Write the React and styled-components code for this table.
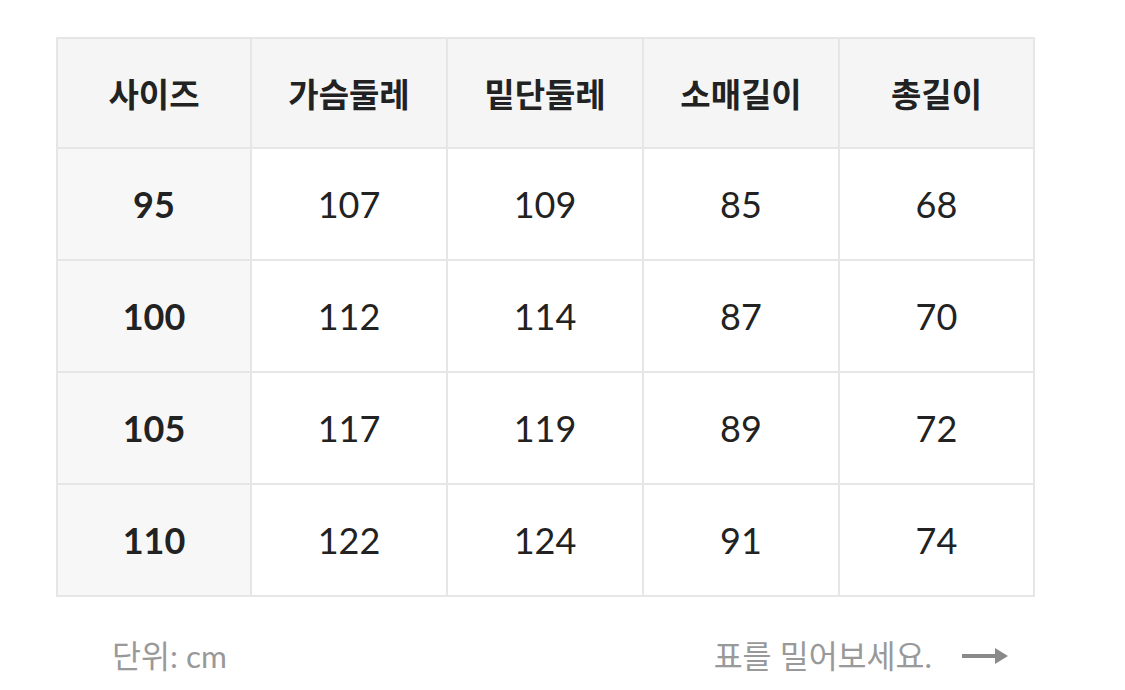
import React from "react";
import styled, { createGlobalStyle } from "styled-components";

const Global = createGlobalStyle`
  html, body { margin: 0; padding: 0; background: #fff; }
  body { font-family: Lato, "Noto Sans CJK KR", sans-serif; color: #222; }
`;

const Page = styled.div`
  padding: 37px 0 0 56px;
  width: 979px;
`;

const Table = styled.table`
  width: 977px;
  border-collapse: collapse;
  table-layout: fixed;
  border: 2px solid #e6e6e6;
`;

const Col = styled.col`
  width: ${(p) => p.$w}px;
`;

const Row = styled.tr`
  height: ${(p) => (p.$head ? "110px" : "112px")};
`;

const HeadCell = styled.th`
  background: #f5f5f5;
  border: 2px solid #e6e6e6;
  font-family: "Noto Sans CJK KR", sans-serif;
  font-size: 33px;
  font-weight: 700;
  color: #222;
  text-align: center;
  vertical-align: middle;
  padding: 0;
`;

const Cell = styled.td`
  background: ${(p) => (p.$size ? "#f7f7f7" : "#fff")};
  border: 2px solid #e6e6e6;
  font-family: Lato, "Noto Sans CJK KR", sans-serif;
  font-size: 36px;
  font-weight: ${(p) => (p.$size ? 700 : 400)};
  color: #222;
  text-align: center;
  vertical-align: middle;
  padding: 0;
`;

const Footer = styled.div`
  display: flex;
  justify-content: space-between;
  align-items: center;
  margin-top: 39px;
  padding: 0 27px 0 56px;
  font-family: Lato, "Noto Sans CJK KR", sans-serif;
  font-size: 31.5px;
  line-height: 40px;
  color: #999;
`;

const Hint = styled.div`
  display: flex;
  align-items: center;
  gap: 30px;
`;

const Arrow = () => (
  <svg width="46" height="20" viewBox="0 0 46 20">
    <rect x="0" y="8" width="36" height="4" fill="#8a8a8a" />
    <path d="M33 2 L46 10 L33 18 Z" fill="#8a8a8a" />
  </svg>
);

const widths = [194, 196, 196, 196, 195];
const headers = ["사이즈", "가슴둘레", "밑단둘레", "소매길이", "총길이"];
const rows = [
  ["95", "107", "109", "85", "68"],
  ["100", "112", "114", "87", "70"],
  ["105", "117", "119", "89", "72"],
  ["110", "122", "124", "91", "74"],
];

export default function App() {
  return (
    <Page>
      <Global />
      <Table>
        <colgroup>
          {widths.map((w, i) => (
            <Col key={i} $w={w} />
          ))}
        </colgroup>
        <thead>
          <Row $head>
            {headers.map((h) => (
              <HeadCell key={h}>{h}</HeadCell>
            ))}
          </Row>
        </thead>
        <tbody>
          {rows.map((r) => (
            <Row key={r[0]}>
              {r.map((v, i) => (
                <Cell key={i} $size={i === 0}>
                  {v}
                </Cell>
              ))}
            </Row>
          ))}
        </tbody>
      </Table>
      <Footer>
        <span>단위: cm</span>
        <Hint>
          <span>표를 밀어보세요.</span>
          <Arrow />
        </Hint>
      </Footer>
    </Page>
  );
}
